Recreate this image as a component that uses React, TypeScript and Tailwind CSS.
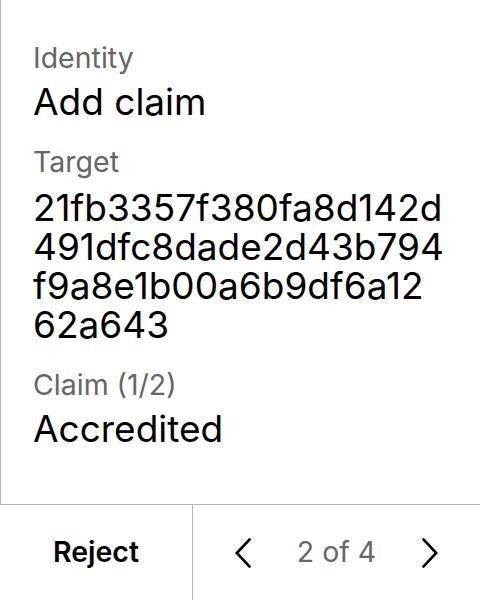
import React from "react";

function Label({ children }: { children: React.ReactNode }) {
  return <div className="text-[28.5px] leading-[34px] text-[#666666]">{children}</div>;
}

function Value({ children }: { children: React.ReactNode }) {
  return <div className="text-[37px] leading-[39px] text-black whitespace-nowrap">{children}</div>;
}

function Chevron({ dir }: { dir: "left" | "right" }) {
  return (
    <svg width="16" height="30" viewBox="0 0 16 30" fill="none" stroke="#000" strokeWidth="2.6" strokeLinecap="square" strokeLinejoin="miter">
      {dir === "left" ? <polyline points="14.5,1.5 1.8,15 14.5,28.5" /> : <polyline points="1.5,1.5 14.2,15 1.5,28.5" />}
    </svg>
  );
}

const targetLines = ["21fb3357f380fa8d142d", "491dfc8dade2d43b794", "f9a8e1b00a6b9df6a12", "62a643"];

export default function App() {
  return (
    <div className="w-[480px] h-[600px] flex flex-col bg-white" style={{ fontFamily: "Inter, 'Noto Sans', sans-serif" }}>
      <div className="flex-1 border-l border-[#b3b3b3] pl-[32px] pr-[24px] pt-[41px] flex flex-col gap-[24px] overflow-hidden">
        <div className="flex flex-col gap-[7px]">
          <Label>Identity</Label>
          <Value>Add claim</Value>
        </div>
        <div className="flex flex-col gap-[9px]">
          <Label>Target</Label>
          <div className="flex flex-col">
            {targetLines.map((l) => (
              <Value key={l}>{l}</Value>
            ))}
          </div>
        </div>
        <div className="flex flex-col gap-[7px]">
          <Label>Claim (1/2)</Label>
          <Value>Accredited</Value>
        </div>
      </div>
      <div className="h-[96px] border-t border-[#b3b3b3] flex">
        <button className="w-[193px] border-r border-[#b3b3b3] flex items-center justify-center text-[28.5px] font-semibold text-black">
          Reject
        </button>
        <div className="flex-1 flex items-center justify-between px-[42px]">
          <Chevron dir="left" />
          <span className="text-[28.5px] text-[#666666]">2 of 4</span>
          <Chevron dir="right" />
        </div>
      </div>
    </div>
  );
}
